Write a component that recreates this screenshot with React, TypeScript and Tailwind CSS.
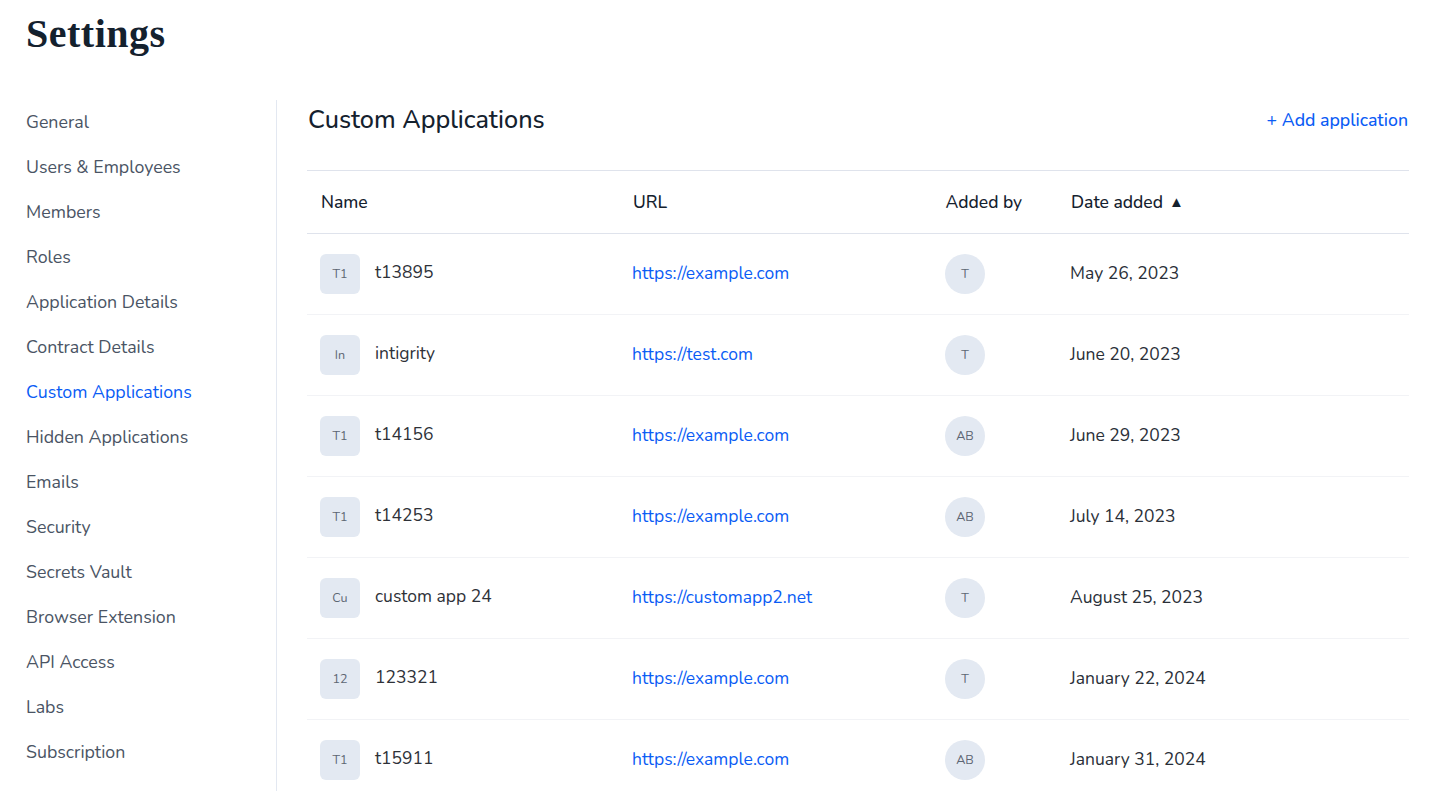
const font = "font-['Nunito','Noto_Sans','Open_Sans',sans-serif]";

const navItems = [
  "General",
  "Users & Employees",
  "Members",
  "Roles",
  "Application Details",
  "Contract Details",
  "Custom Applications",
  "Hidden Applications",
  "Emails",
  "Security",
  "Secrets Vault",
  "Browser Extension",
  "API Access",
  "Labs",
  "Subscription",
];

const rows = [
  { tile: "T1", name: "t13895", url: "https://example.com", by: "T", date: "May 26, 2023" },
  { tile: "In", name: "intigrity", url: "https://test.com", by: "T", date: "June 20, 2023" },
  { tile: "T1", name: "t14156", url: "https://example.com", by: "AB", date: "June 29, 2023" },
  { tile: "T1", name: "t14253", url: "https://example.com", by: "AB", date: "July 14, 2023" },
  { tile: "Cu", name: "custom app 24", url: "https://customapp2.net", by: "T", date: "August 25, 2023" },
  { tile: "12", name: "123321", url: "https://example.com", by: "T", date: "January 22, 2024" },
  { tile: "T1", name: "t15911", url: "https://example.com", by: "AB", date: "January 31, 2024" },
];

export default function App() {
  return (
    <div className={`${font} h-[791px] overflow-hidden bg-white`}>
      <h1 className="h-[100px] pl-[26px] pt-[11px] font-['Liberation_Serif',serif] text-[40px] leading-[46px] font-bold tracking-[0.5px] text-[#14212e]">
        Settings
      </h1>
      <div className="flex h-[691px]">
        {/* sidebar */}
        <nav className="w-[277px] shrink-0 border-r border-[#e3e8f1] pl-[26px]">
          {navItems.map((item) => (
            <div
              key={item}
              className={`flex h-[45px] items-center pb-[2px] text-[17.8px] leading-[24px] ${
                item === "Custom Applications" ? "text-[#0a5cf5]" : "text-[#4a5464]"
              }`}
            >
              {item}
            </div>
          ))}
          <div className="pt-[11px] text-[17.8px] leading-[24px] text-[#4a5464]">Access Control</div>
        </nav>

        <main className="min-w-0 flex-1 pl-[30px] pr-[28px]">
          <div className="flex h-[70px] items-start justify-between pl-px pt-[2px]">
            <h2 className="text-[25.2px] leading-[36px] font-medium text-[#14212e]">Custom Applications</h2>
            <a className="text-[17.7px] leading-[36px] font-medium text-[#0a5cf5]">+ Add application</a>
          </div>

          <div className="-mr-px grid h-[64px] grid-cols-[312px_313px_125px_1fr] items-center border-y border-[#dfe3ec] pl-[13px] text-[17.5px] leading-[24px] font-medium text-[#14212e]">
            <span className="pl-px">Name</span>
            <span className="pl-px">URL</span>
            <span className="pl-[0.5px]">Added by</span>
            <span className="flex items-center gap-[6px] pl-px">
              Date added <span className="text-[15px]">▲</span>
            </span>
          </div>

          {rows.map((row, i) => (
            <div
              key={i}
              className="-mr-px grid h-[81px] grid-cols-[312px_313px_125px_1fr] items-center border-b border-[#f2f3f6] pl-[13px] text-[17.5px] leading-[24px]"
            >
              <div className="flex items-center gap-[15px] text-[#2e3138]">
                <span className="flex h-10 w-10 items-center justify-center rounded-md bg-[#e3e9f2] text-[12.5px] text-[#5d6673]">
                  {row.tile}
                </span>
                <span className="pb-[5px]">{row.name}</span>
              </div>
              <a className="pb-[3px] text-[#0a5cf5]">{row.url}</a>
              <span className="flex h-10 w-10 items-center justify-center rounded-full bg-[#e3e9f2] text-[12.5px] text-[#5d6673]">
                {row.by}
              </span>
              <span className="pb-[3px] text-[#2a2f38]">{row.date}</span>
            </div>
          ))}
        </main>
      </div>
    </div>
  );
}
